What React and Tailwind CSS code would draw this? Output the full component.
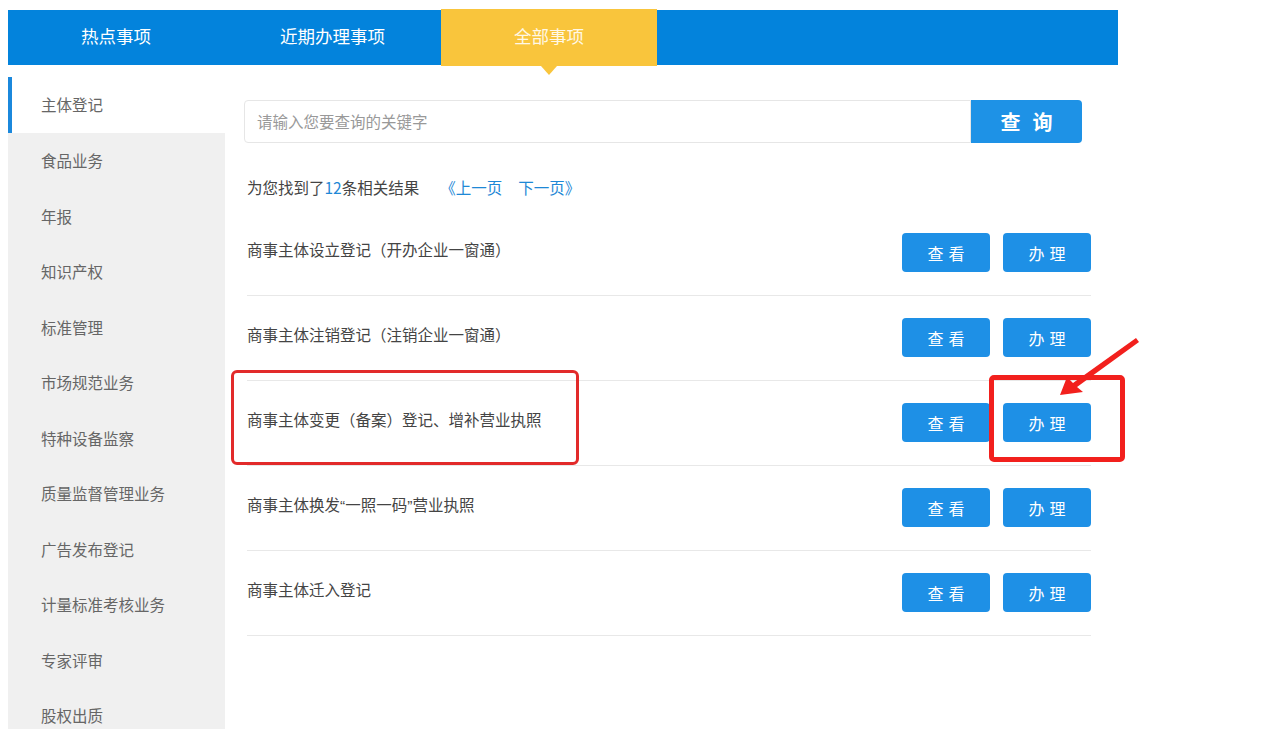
import React from "react";

const sideItems = [
  "主体登记",
  "食品业务",
  "年报",
  "知识产权",
  "标准管理",
  "市场规范业务",
  "特种设备监察",
  "质量监督管理业务",
  "广告发布登记",
  "计量标准考核业务",
  "专家评审",
  "股权出质",
];

const Q = ({ children }) => (
  <span style={{ fontFamily: '"Liberation Sans", sans-serif' }}>{children}</span>
);

const rows = [
  "商事主体设立登记（开办企业一窗通）",
  "商事主体注销登记（注销企业一窗通）",
  "商事主体变更（备案）登记、增补营业执照",
  <>
    商事主体换发<Q>“</Q>一照一码<Q>”</Q>营业执照
  </>,
  "商事主体迁入登记",
];

const font = { fontFamily: '"Noto Sans CJK SC", "Noto Sans", sans-serif' };

export default function App() {
  return (
    <div
      className="relative w-[1280px] h-[729px] overflow-hidden bg-white"
      style={font}
    >
      <div className="pt-[10px] pl-[8px]">
        {/* Tab bar */}
        <div className="flex w-[1110px] h-[55px] bg-[#0383dc]">
          <div className="w-[216px] flex items-center justify-center text-white text-[17.5px] pb-[2px]">
            热点事项
          </div>
          <div className="w-[217px] flex items-center justify-center text-white text-[17.5px] pb-[2px]">
            近期办理事项
          </div>
          <div className="relative w-[216px] h-[57px] -mt-px flex items-center justify-center bg-[#f9c53c] text-[#fff8e6] text-[17.5px] pb-[2px]">
            全部事项
            <div className="absolute left-1/2 -translate-x-1/2 top-full w-0 h-0 border-l-[8px] border-r-[8px] border-t-[9px] border-l-transparent border-r-transparent border-t-[#f9c53c]" />
          </div>
        </div>

        <div className="flex mt-[12px]">
          {/* Sidebar */}
          <div className="w-[217px] flex flex-col">
            {sideItems.map((s, i) => (
              <div
                key={s}
                className={
                  i === 0
                    ? "h-[56px] flex items-center pl-[29px] bg-white border-l-[4px] border-[#1b88dc] text-[15.5px] text-[#666]"
                    : "h-[55.5px] flex items-center pl-[33px] bg-[#f0f0f0] text-[15.5px] text-[#666]"
                }
              >
                {s}
              </div>
            ))}
          </div>

          {/* Main */}
          <div className="ml-[19px] pt-[23px] w-[850px]">
            <div className="flex h-[43px]">
              <div className="w-[727px] h-full border border-[#e6e6e6] rounded-l-[4px] flex items-center pl-[12px] text-[15.5px] text-[#999]">
                请输入您要查询的关键字
              </div>
              <button className="w-[111px] h-full bg-[#1e92e6] rounded-r-[4px] text-white text-[20px] font-bold tracking-[12px] pl-[12px] flex items-center justify-center">
                查询
              </button>
            </div>

            <div className="mt-[35px] ml-[3px] h-[20px] flex items-center text-[15.5px] text-[#444]">
              <span>
                为您找到了<span className="text-[#1e88d6]">12</span>条相关结果
              </span>
              <span className="ml-[21px] text-[#1e88d6]">《上一页</span>
              <span className="ml-[16px] text-[#1e88d6]">下一页》</span>
            </div>

            <div className="mt-[13px] ml-[3px] w-[844px]">
              {rows.map((r, i) => (
                <div
                  key={i}
                  className="h-[85px] flex items-center justify-between border-b border-[#e8e8e8]"
                >
                  <div className="text-[15.5px] text-[#444] mb-[6px]">{r}</div>
                  <div className="flex gap-[13px] mb-[1px]">
                    <button className="w-[88px] h-[39px] rounded-[4px] bg-[#1e90e6] text-white text-[16px] tracking-[5px] pl-[5px]">
                      查看
                    </button>
                    <button className="w-[88px] h-[39px] rounded-[4px] bg-[#1e90e6] text-white text-[16px] tracking-[5px] pl-[5px]">
                      办理
                    </button>
                  </div>
                </div>
              ))}
            </div>
          </div>
        </div>
      </div>

      {/* Annotations */}
      <div className="absolute left-[231px] top-[370px] w-[348px] h-[95px] border-[3px] border-[#e22a2a] rounded-[6px]" />
      <div className="absolute left-[989px] top-[375px] w-[136px] h-[87px] border-[5px] border-[#f2201d] rounded-[5px]" />
      <svg
        className="absolute left-0 top-0"
        width="1280"
        height="729"
        viewBox="0 0 1280 729"
      >
        <polygon
          points="1060,395 1067,377 1073,383 1136,338 1139,342 1077,387 1083,392"
          fill="#f2201d"
        />
      </svg>
    </div>
  );
}
